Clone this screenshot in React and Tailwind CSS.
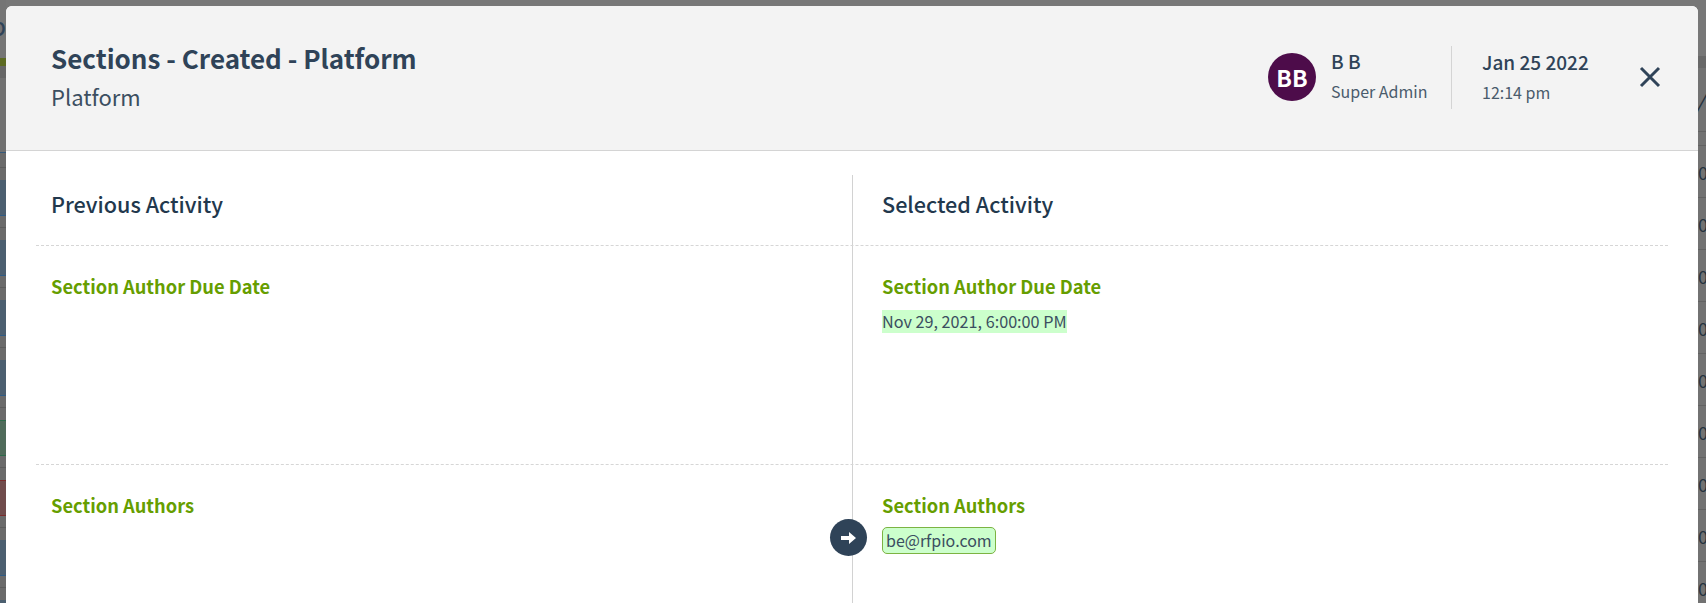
import React from "react";

const font = { fontFamily: '"Noto Sans CJK SC", "Noto Sans", sans-serif' };

const leftRows = ["blue", "blue", "blue", "blue", "green", "red", "blue", "blue"];

const LeftStrip = () => (
  <div className="w-[6px] shrink-0 h-full overflow-hidden bg-[#6f6f6f] flex flex-col">
    <div className="h-[58px] shrink-0 bg-[#757575] overflow-hidden pt-[12px]">
      <div className="text-[26px] leading-[26px] text-[#2f4358] ml-[-10px] whitespace-nowrap">p</div>
    </div>
    <div className="h-[8px] shrink-0 bg-[#5c6a22]" />
    <div className="h-[12px] shrink-0 bg-[#666666]" />
    <div className="h-[75px] shrink-0 bg-[#707070] border-b border-[#35597a]" />
    <div className="h-[15px] shrink-0 bg-[#6a6a6a] border-b border-[#5c5c5c]" />
    <div className="h-[12px] shrink-0 bg-[#6a6a6a]" />
    {leftRows.map((c, i) => (
      <div key={i} className="shrink-0 flex flex-col">
        <div
          className={
            c === "blue"
              ? "h-[36px] bg-[#4c5f70] border-b border-[#2f5c85]"
              : c === "green"
              ? "h-[36px] bg-[#4f6b5a] border-y border-[#2d6b4a]"
              : "h-[36px] bg-[#704c4c] border-y border-[#7a2c2c]"
          }
        />
        <div className="h-[12px] bg-[#6a6a6a] border-b border-[#5c5c5c]" />
        <div className="h-[12px] bg-[#6a6a6a]" />
      </div>
    ))}
  </div>
);

const RightStrip = () => (
  <div className="w-[8px] shrink-0 h-full overflow-hidden bg-[#727272] flex flex-col text-[#26333f]">
    <div className="h-[56px] shrink-0 bg-[#777777]" />
    <div className="h-[12px] shrink-0 bg-[#686868]" />
    <div className="h-[64px] shrink-0 border-b border-[#626262] pt-[18px]">
      <div className="text-[24px] leading-[30px] italic ml-[-3px]">/</div>
    </div>
    <div className="h-[14px] shrink-0 border-b border-[#626262]" />
    {[0, 1, 2, 3, 4, 5, 6, 7, 8].map((i) => (
      <div key={i} className="h-[52px] shrink-0 border-b border-[#626262] flex items-center">
        <span className="text-[18px] leading-[24px] whitespace-nowrap">0</span>
      </div>
    ))}
  </div>
);

const Field = ({ label, children, height }) => (
  <div className={`grid grid-cols-[817px_1fr] border-t border-dashed border-[#d6d6d6] ${height}`}>
    <div className="pl-[15px] pt-[28px] border-r border-[#d2d2d2]">
      <div className="text-[18.3px] leading-[24px] font-semibold text-[#669e00]">{label}</div>
    </div>
    <div className="px-[29px] pt-[28px] relative">
      <div className="text-[18.3px] leading-[24px] font-semibold text-[#669e00]">{label}</div>
      {children}
    </div>
  </div>
);

export default function App() {
  return (
    <div className="h-[603px] w-full overflow-hidden bg-[#777777] flex" style={font}>
      <LeftStrip />
      <div className="flex-1 mt-[6px] bg-white rounded-t-[6px] overflow-hidden flex flex-col">
        <header className="h-[145px] shrink-0 bg-[#f3f3f3] border-b border-[#d4d4d4] flex items-center pl-[45px] pr-[37px] pb-[2px]">
          <div className="flex-1 mt-[-2px]">
            <h1 className="text-[26px] leading-[34px] font-semibold text-[#2f4358]">Sections - Created - Platform</h1>
            <p className="text-[22px] leading-[30px] mt-[6px] text-[#3b4e60]">Platform</p>
          </div>
          <div className="flex items-center">
            <div className="w-[48px] h-[48px] rounded-full bg-[#4d0c4a] text-white text-[23px] font-semibold flex items-center justify-center">BB</div>
            <div className="ml-[15px] w-[96px] whitespace-nowrap mt-[-4px]">
              <div className="text-[19px] leading-[24px] font-medium text-[#2f4358]">B B</div>
              <div className="text-[16px] leading-[22px] mt-[7px] text-[#4a5b6c]">Super Admin</div>
            </div>
            <div className="w-px h-[63px] bg-[#d4d4d4] ml-[24px]" />
            <div className="ml-[30px] w-[106px] whitespace-nowrap mt-[-2px]">
              <div className="text-[19px] leading-[24px] font-medium text-[#2f4358]">Jan 25 2022</div>
              <div className="text-[16px] leading-[22px] mt-[7px] text-[#4a5b6c]">12:14 pm</div>
            </div>
            <button className="ml-[51px] text-[#2f4358]">
              <svg width="22" height="22" viewBox="0 0 22 22" fill="none" stroke="currentColor" strokeWidth="3">
                <path d="M2 2 L20 20 M20 2 L2 20" />
              </svg>
            </button>
          </div>
        </header>

        <main className="flex-1 px-[30px] pt-[24px]">
          <div className="grid grid-cols-[817px_1fr] h-[70px]">
            <div className="pl-[15px] pt-[14px] border-r border-[#d2d2d2]">
              <h2 className="text-[21.6px] leading-[30px] font-medium text-[#22384d]">Previous Activity</h2>
            </div>
            <div className="px-[29px] pt-[14px]">
              <h2 className="text-[21.6px] leading-[30px] font-medium text-[#22384d]">Selected Activity</h2>
            </div>
          </div>

          <Field label="Section Author Due Date" height="h-[219px]">
            <div className="mt-[11px] leading-[24px]">
              <span className="inline-block bg-[#ccffcc] text-[16.2px] leading-[23px] text-[#3b4e60]">Nov 29, 2021, 6:00:00 PM</span>
            </div>
          </Field>

          <Field label="Section Authors" height="h-[200px]">
            <div className="mt-[10px] flex">
              <span className="bg-[#ccffcc] border border-[#7cb342] rounded-[5px] px-[3px] text-[16px] leading-[25px] text-[#3b4e60]">be@rfpio.com</span>
            </div>
            <div className="absolute left-[-23px] top-[54px] w-[37px] h-[37px] rounded-full bg-[#2f4358] flex items-center justify-center">
              <svg width="16" height="14" viewBox="0 0 16 14" fill="white">
                <path d="M0 5 H8 V1 L15 7 L8 13 V9 H0 Z" />
              </svg>
            </div>
          </Field>
        </main>
      </div>
      <RightStrip />
    </div>
  );
}
